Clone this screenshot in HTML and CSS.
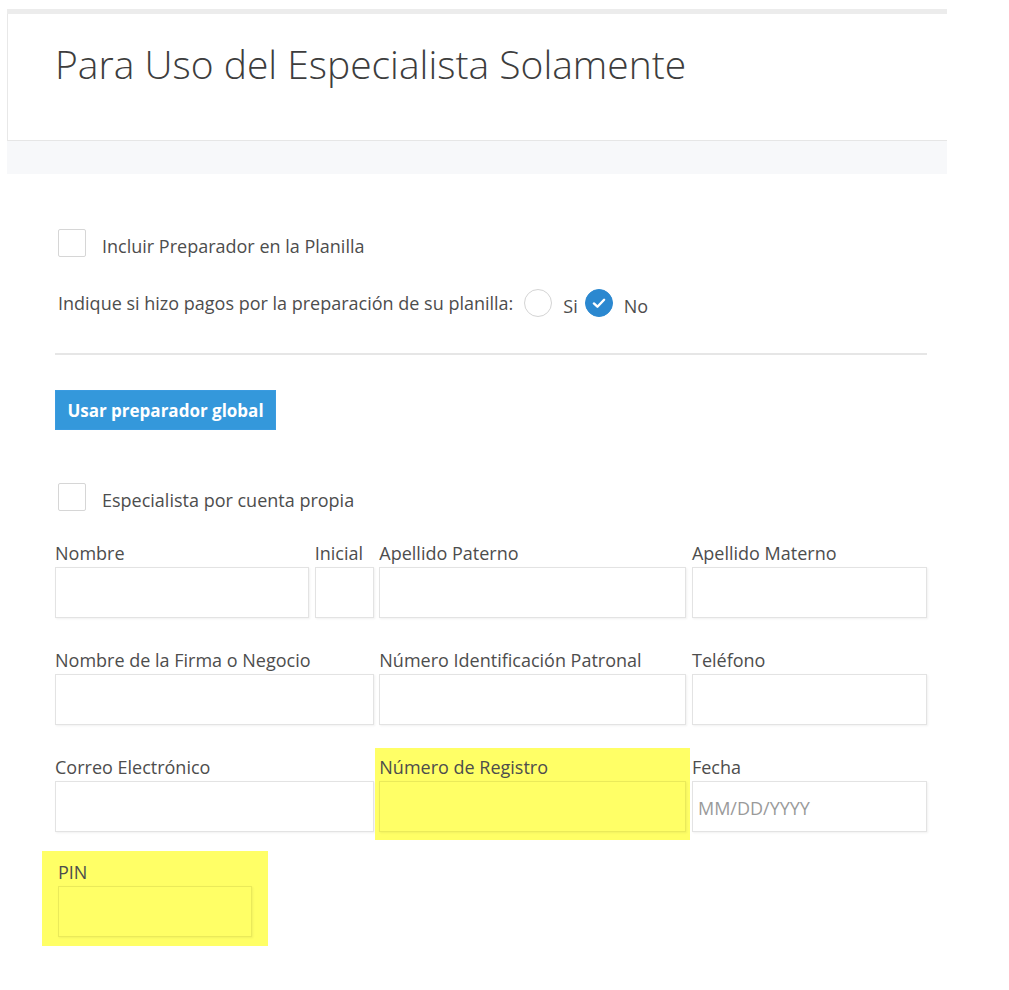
FILE: index.html
```html
<!DOCTYPE html>
<html lang="es">
<head>
<meta charset="utf-8">
<title>Para Uso del Especialista Solamente</title>
<link rel="stylesheet" href="styles.css">
</head>
<body>
<div class="page">
  <div class="topstrip"></div>
  <div class="card">
    <h1 class="title">Para Uso del Especialista Solamente</h1>
  </div>
  <div class="graybar"></div>

  <div class="content">
    <label class="check-row first">
      <span class="box"></span>
      <span class="check-text">Incluir Preparador en la Planilla</span>
    </label>

    <div class="radio-row">
      <span class="radio-q">Indique si hizo pagos por la preparación de su planilla:</span>
      <span class="radio"></span>
      <span class="radio-text">Si</span>
      <span class="radio checked">
        <svg viewBox="0 0 28 28" width="28" height="28"><path d="M8.5 14.5 L12.3 18 L19.5 10.5" fill="none" stroke="#fff" stroke-width="2.6" stroke-linecap="round" stroke-linejoin="round"/></svg>
      </span>
      <span class="radio-text">No</span>
    </div>

    <div class="divider"></div>

    <button class="btn" type="button">Usar preparador global</button>

    <label class="check-row second">
      <span class="box"></span>
      <span class="check-text">Especialista por cuenta propia</span>
    </label>

    <div class="grid">
      <div class="field"><div class="lbl">Nombre</div><div class="inp"></div></div>
      <div class="field"><div class="lbl">Inicial</div><div class="inp"></div></div>
      <div class="field"><div class="lbl">Apellido Paterno</div><div class="inp"></div></div>
      <div class="field"><div class="lbl">Apellido Materno</div><div class="inp"></div></div>

      <div class="field span2"><div class="lbl">Nombre de la Firma o Negocio</div><div class="inp"></div></div>
      <div class="field"><div class="lbl">Número Identificación Patronal</div><div class="inp"></div></div>
      <div class="field"><div class="lbl">Teléfono</div><div class="inp"></div></div>

      <div class="field span2"><div class="lbl">Correo Electrónico</div><div class="inp"></div></div>
      <div class="field hl"><div class="lbl">Número de Registro</div><div class="inp"></div></div>
      <div class="field"><div class="lbl">Fecha</div><div class="inp"><span class="ph">MM/DD/YYYY</span></div></div>
    </div>

    <div class="pin">
      <div class="lbl">PIN</div>
      <div class="inp"></div>
    </div>
  </div>
</div>
</body>
</html>
```

FILE: styles.css
```css
html, body {
  margin: 0;
  padding: 0;
  background: #fff;
}
body {
  font-family: "Open Sans", "Liberation Sans", sans-serif;
  color: #4d4d4d;
  font-size: 18px;
}
.page {
  margin-left: 7px;
  width: 940px;
  padding-top: 9px;
}
.topstrip {
  height: 5px;
  background: #ececec;
}
.card {
  height: 127px;
  border-left: 1px solid #e8e8e8;
  border-bottom: 1px solid #e6e6e6;
  box-sizing: border-box;
  background: #fff;
}
.title {
  margin: 0;
  padding: 24px 0 0 47px;
  font-weight: 300;
  font-size: 39px;
  line-height: 52px;
  color: #3d3d3d;
}
.graybar {
  height: 33px;
  background: #f7f8fa;
}
.content {
  padding-left: 48px;
  width: 872px;
}
.check-row {
  display: flex;
  align-items: center;
  margin-left: 3px;
}
.check-row.first {
  margin-top: 55px;
}
.check-row.second {
  margin-top: 53px;
}
.box {
  width: 28px;
  height: 28px;
  box-sizing: border-box;
  border: 1px solid #d6d6d6;
  border-radius: 2px;
  background: #fff;
}
.check-text {
  margin-left: 16px;
  line-height: 24px;
  position: relative;
  top: 3px;
}
.radio-row {
  display: flex;
  align-items: center;
  margin-top: 28px;
  margin-left: 3px;
  height: 36px;
}
.radio-q {
  margin-right: 11px;
}
.radio {
  width: 28px;
  height: 28px;
  box-sizing: border-box;
  border: 1px solid #d4d4d4;
  border-radius: 50%;
  background: #fff;
  display: flex;
  align-items: center;
  justify-content: center;
}
.radio.checked {
  background: #2b88d0;
  border-color: #2b88d0;
}
.radio.checked svg {
  display: block;
}
.radio-text {
  margin-left: 11px;
  margin-right: 7px;
  position: relative;
  top: 3px;
}
.divider {
  margin-top: 32px;
  height: 2px;
  background: #e6e6e6;
}
.btn {
  display: block;
  margin-top: 35px;
  width: 221px;
  height: 40px;
  border: 1px solid #3a9be0;
  background: #3498db;
  color: #fff;
  font-family: "Open Sans", "Liberation Sans", sans-serif;
  font-weight: 700;
  font-size: 17px;
  padding: 0;
  border-radius: 0;
}
.grid {
  display: grid;
  grid-template-columns: 254px 59px 307px 235px;
  column-gap: 5.67px;
  row-gap: 30px;
  margin-top: 30px;
}
.field {
  display: flex;
  flex-direction: column;
}
.span2 {
  grid-column: span 2;
}
.lbl {
  line-height: 24px;
  height: 24px;
  margin-bottom: 2px;
  white-space: nowrap;
  color: #4d4d4d;
}
.inp {
  height: 51px;
  box-sizing: border-box;
  border: 1px solid #e3e3e3;
  box-shadow: 1px 1px 2px rgba(0, 0, 0, 0.06);
  background: #fff;
  display: flex;
  align-items: center;
  padding-left: 5px;
}
.ph {
  color: #9a9a9a;
  position: relative;
  top: 1px;
}
.hl {
  background: #ffff66;
  margin: -7px -4px -8px -4px;
  padding: 7px 4px 8px 4px;
}
.hl .inp,
.pin .inp {
  background: transparent;
  border-color: #eaea5a;
}
.pin {
  background: #ffff66;
  width: 194px;
  margin-left: -13px;
  margin-top: 19px;
  padding: 9px 16px 9px 16px;
}
```
